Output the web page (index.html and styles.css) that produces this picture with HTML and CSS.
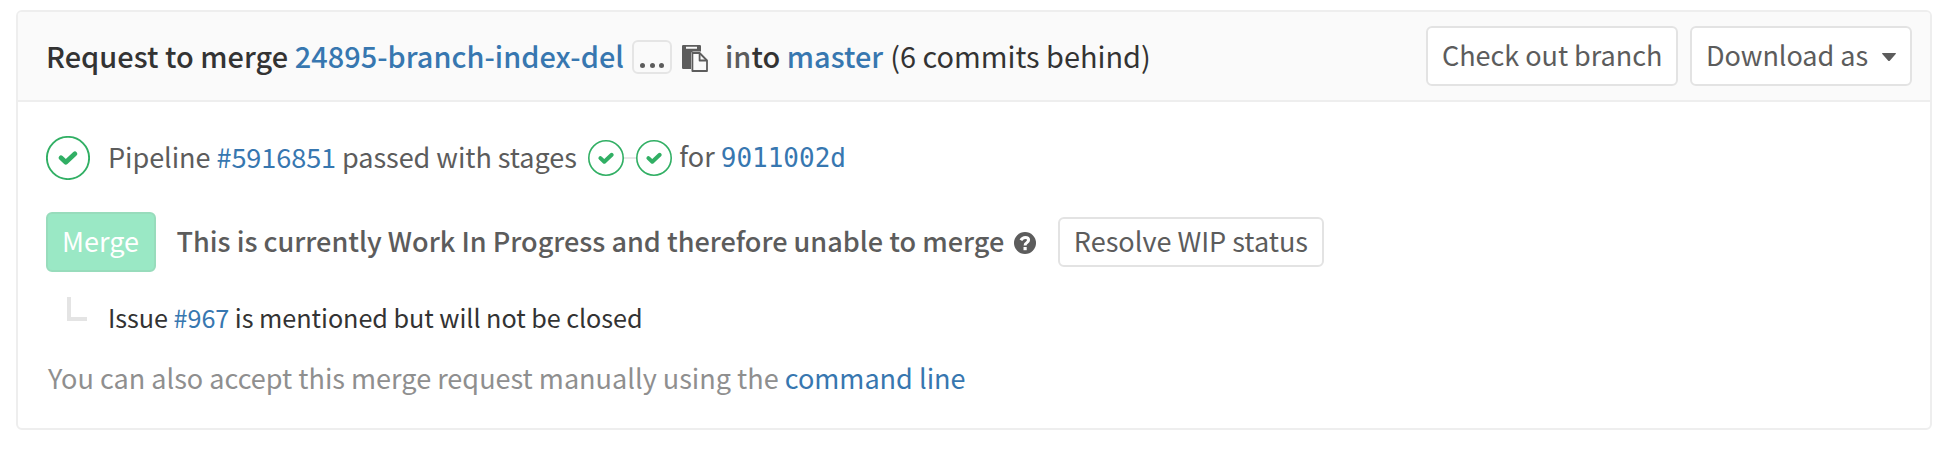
FILE: index.html
```html
<!DOCTYPE html>
<html lang="en">
<head>
<meta charset="utf-8">
<title>Merge request</title>
<link rel="stylesheet" href="styles.css">
</head>
<body>
<section class="widget">
  <header class="widget-head">
    <div class="branches">
      <span class="strong">Request to merge <a>24895-branch-index-del</a></span>
      <span class="ellipsis"><i></i><i></i><i></i></span>
      <svg class="clipboard" width="26" height="28" viewBox="0 0 26 28">
        <path fill="#5c5c5c" fill-rule="evenodd" d="M1.200 1h16.600Q19 1 19 2.200V7.500H11.500Q9 7.500 9 10V25H1.200Q0 25 0 23.800V2.200Q0 1 1.200 1zM4 2.800v2h11v-2z"/>
        <path fill="#fafafa" stroke="#5c5c5c" stroke-width="1.800" stroke-linejoin="round" d="M10.400 9h7.200l7.400 7.500V27H10.400z"/>
        <path fill="none" stroke="#5c5c5c" stroke-width="1.800" stroke-linejoin="round" d="M17.600 9v7.500H25"/>
      </svg>
      <span class="strong into"><span class="muted-strong">in</span>to <a>master</a></span>
      <span class="behind">(6 commits behind)</span>
    </div>
    <div class="actions">
      <button class="btn checkout">Check out branch</button>
      <button class="btn download">Download as <svg class="caret" width="14" height="9" viewBox="0 0 14 9"><path fill="#5c5c5c" d="M.5 0h13q.7.500.2 1.100L7.800 7.700q-.8.700-1.600 0L.3 1.100Q-.2.500.5 0z"/></svg></button>
    </div>
  </header>
  <div class="pipeline">
    <svg class="status" width="44" height="44" viewBox="0 0 44 44">
      <circle cx="22" cy="22" r="21.100" fill="#fff" stroke="#31af64" stroke-width="1.900"/>
      <path class="tick" stroke-width="4.800" stroke-linejoin="miter" d="M15 21.800l4.800 4.400 9.100-8.400"/>
    </svg>
    <span class="pipeline-text">Pipeline <a>#5916851</a> passed with stages</span>
    <span class="stages">
      <svg width="36" height="36" viewBox="0 0 36 36"><circle cx="18" cy="18" r="17.200" fill="#fff" stroke="#31af64" stroke-width="1.600"/><path class="tick" stroke-width="4" d="M12.400 18.100l3.900 3.600 7.400-6.900"/></svg>
      <b class="link-line"></b>
      <svg width="36" height="36" viewBox="0 0 36 36"><circle cx="18" cy="18" r="17.200" fill="#fff" stroke="#31af64" stroke-width="1.600"/><path class="tick" stroke-width="4" d="M12.400 18.100l3.900 3.600 7.400-6.900"/></svg>
    </span>
    <span>for <a class="sha">9011002d</a></span>
  </div>
  <div class="merge-row">
    <button class="btn merge">Merge</button>
    <span class="wip">This is currently Work In Progress and therefore unable to merge</span>
    <svg class="help" width="22" height="22" viewBox="0 0 22 22">
      <circle cx="11" cy="11" r="11" fill="#5c5c5c"/>
      <path fill="none" stroke="#fff" stroke-width="3" d="M6.900 8.300C8 6.300 9.400 5.400 11.300 5.400c2 0 3.300 1.200 3.300 2.700 0 2.700-3.500 2.400-3.500 5.300"/>
      <path fill="#fff" d="M9.500 15h3.200v3.200H9.500z"/>
    </svg>
    <button class="btn resolve">Resolve WIP status</button>
  </div>
  <div class="issue-row">
    <b class="elbow"></b>
    <span>Issue <a>#967</a> is mentioned but will not be closed</span>
  </div>
  <p class="manual">You can also accept this merge request manually using the <a>command line</a></p>
</section>
</body>
</html>
```

FILE: styles.css
```css
* { box-sizing: border-box; }
body {
  margin: 0;
  padding: 10px 24px 0 16px;
  background: #fff;
  color: #5c5c5c;
  font: 27.05px/36px "Noto Sans CJK SC", sans-serif;
  white-space: nowrap;
}
a { color: #3777b0; }
svg { display: block; flex: none; }
.widget {
  height: 420px;
  border: 2px solid #eee;
  border-radius: 6px;
}
.widget-head {
  display: flex;
  justify-content: space-between;
  height: 90px;
  padding: 14px 18px 14px 28px;
  border-bottom: 2px solid #eee;
  border-radius: 4px 4px 0 0;
  background: #fafafa;
}
.branches {
  display: flex;
  align-items: center;
  padding-bottom: 3px;
  color: #333;
  font-size: 28.9px;
}
.strong { font-weight: 500; letter-spacing: .04px; }
.muted-strong { color: #5c5c5c; }
.ellipsis {
  display: flex;
  gap: 4.5px;
  justify-content: center;
  align-items: flex-end;
  width: 40px;
  height: 34px;
  margin: 5px 10px 0 8px;
  padding-bottom: 4px;
  border: 2px solid #e5e5e5;
  border-radius: 6px;
}
.ellipsis i {
  width: 5px;
  height: 5px;
  border-radius: 50%;
  background: #5c5c5c;
}
.clipboard { margin-top: 7px; }
.into { margin: 0 7px 0 17px; }
.actions { display: flex; gap: 12px; }
.btn {
  display: flex;
  align-items: center;
  height: 60px;
  padding: 0 14px 3px;
  border: 2px solid #e3e3e3;
  border-radius: 6px;
  background: #fff;
  color: #5c5c5c;
  font: inherit;
}
.checkout { width: 252px; letter-spacing: -.04px; }
.download { width: 222px; letter-spacing: -.06px; }
.caret { margin: 5px 0 0 auto; }
.pipeline, .merge-row {
  display: flex;
  align-items: center;
  padding-left: 28px;
}
.pipeline { height: 44px; margin-top: 34px; }
.pipeline > span { padding-bottom: 3px; }
.pipeline-text { letter-spacing: -.06px; }
.status { margin-right: 18px; }
.tick { fill: none; stroke: #31af64; stroke-linecap: round; stroke-linejoin: round; }
.pipeline > .stages {
  display: flex;
  align-items: center;
  margin: 0 7.500px 0 11px;
  padding: 0;
}
.link-line { width: 12px; height: 2px; background: #e8e8e8; }
.sha { font: 26px/36px "DejaVu Sans Mono", monospace; }
.merge-row { height: 60px; margin-top: 32px; }
.merge { width: 110px; background: #9ae8c5; border-color: #98dcbc; color: #fff; }
.wip { margin-left: 20.5px; padding-bottom: 3px; font-weight: 500; }
.help { margin: 1px 22px 0 9.5px; }
.resolve { width: 266px; height: 50px; }
.issue-row {
  display: flex;
  height: 36px;
  margin-top: 25px;
  padding-left: 49px;
  padding-top: 2px;
  color: #333;
  font-size: 25.2px;
  letter-spacing: -.05px;
}
.elbow {
  width: 20px;
  height: 24px;
  margin: -2px 21px 0 0;
  border: solid #e4e4e4;
  border-width: 0 0 4px 4px;
}
.manual { margin: 27px 0 0 30px; color: #8f8f8f; }
```
